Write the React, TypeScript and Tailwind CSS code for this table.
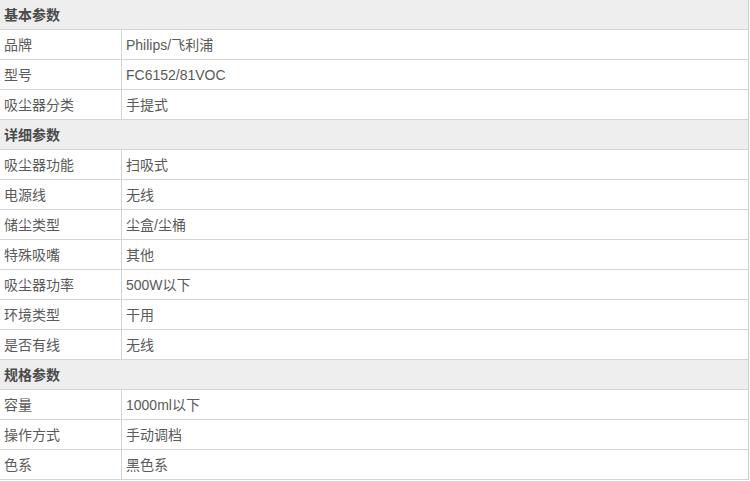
const groups: { title: string; rows: [string, string][] }[] = [
  {
    title: '基本参数',
    rows: [
      ['品牌', 'Philips/飞利浦'],
      ['型号', 'FC6152/81VOC'],
      ['吸尘器分类', '手提式'],
    ],
  },
  {
    title: '详细参数',
    rows: [
      ['吸尘器功能', '扫吸式'],
      ['电源线', '无线'],
      ['储尘类型', '尘盒/尘桶'],
      ['特殊吸嘴', '其他'],
      ['吸尘器功率', '500W以下'],
      ['环境类型', '干用'],
      ['是否有线', '无线'],
    ],
  },
  {
    title: '规格参数',
    rows: [
      ['容量', '1000ml以下'],
      ['操作方式', '手动调档'],
      ['色系', '黑色系'],
    ],
  },
];

export default function App() {
  return (
    <div
      className="w-[749px] border-r border-[#cccccc] bg-white text-[14px] text-[#5a5a5a]"
      style={{ fontFamily: '"Liberation Sans", "Noto Sans CJK SC", sans-serif' }}
    >
      {groups.map((g) => (
        <div key={g.title}>
          <div className="flex h-[30px] items-center border-b border-[#d4d4d4] bg-[#eeeeee] pl-[4px] pt-[1px] font-bold text-[#4a4a4a]">
            {g.title}
          </div>
          {g.rows.map(([k, v]) => (
            <div key={k} className="flex h-[30px] border-b border-[#d4d4d4]">
              <div className="flex w-[122px] shrink-0 items-center border-r border-[#d4d4d4] pl-[4px] pt-[1px]">{k}</div>
              <div className="flex items-center pl-[4px] pt-[1px]">{v}</div>
            </div>
          ))}
        </div>
      ))}
    </div>
  );
}
